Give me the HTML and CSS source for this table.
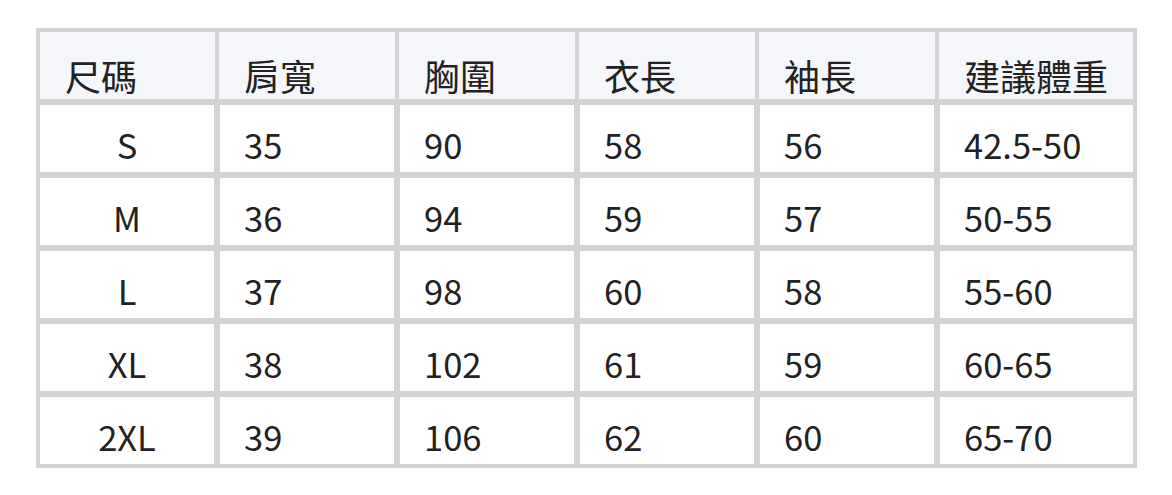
FILE: index.html
```html
<!DOCTYPE html>
<html lang="zh-Hant">
<head>
<meta charset="utf-8">
<title>尺碼表</title>
<link rel="stylesheet" href="styles.css">
</head>
<body>
<div class="size-table">
  <div class="cell head first">尺碼</div>
  <div class="cell head">肩寬</div>
  <div class="cell head">胸圍</div>
  <div class="cell head">衣長</div>
  <div class="cell head">袖長</div>
  <div class="cell head last">建議體重</div>

  <div class="cell data first">S</div>
  <div class="cell data">35</div>
  <div class="cell data">90</div>
  <div class="cell data">58</div>
  <div class="cell data">56</div>
  <div class="cell data last">42.5-50</div>

  <div class="cell data first">M</div>
  <div class="cell data">36</div>
  <div class="cell data">94</div>
  <div class="cell data">59</div>
  <div class="cell data">57</div>
  <div class="cell data last">50-55</div>

  <div class="cell data first">L</div>
  <div class="cell data">37</div>
  <div class="cell data">98</div>
  <div class="cell data">60</div>
  <div class="cell data">58</div>
  <div class="cell data last">55-60</div>

  <div class="cell data first">XL</div>
  <div class="cell data">38</div>
  <div class="cell data">102</div>
  <div class="cell data">61</div>
  <div class="cell data">59</div>
  <div class="cell data last">60-65</div>

  <div class="cell data first">2XL</div>
  <div class="cell data">39</div>
  <div class="cell data">106</div>
  <div class="cell data">62</div>
  <div class="cell data">60</div>
  <div class="cell data last">65-70</div>
</div>
</body>
</html>
```
FILE: styles.css
```css
html, body {
  margin: 0;
  padding: 0;
  background: #ffffff;
}

body {
  font-family: "Noto Sans CJK TC", "Noto Sans", sans-serif;
  color: #222222;
}

.size-table {
  display: grid;
  grid-template-columns: 177px 180px 180px 180px 180px 196px;
  grid-template-rows: 67px repeat(5, 73px);
  width: max-content;
  margin: 28px 0 0 36px;
  border: 4px solid #d3d3d3;
}

.cell {
  box-sizing: border-box;
  font-size: 34.5px;
  line-height: 35px;
  font-weight: 400;
  white-space: nowrap;
  border: 0 solid #d3d3d3;
}

.head {
  background: #f5f6fa;
  font-size: 36px;
  line-height: 36px;
  border-left-width: 2px;
  border-right-width: 2px;
  padding: 25px 0 0 25px;
}

.data {
  background: #ffffff;
  border-top-width: 6px;
  border-left-width: 3px;
  border-right-width: 3px;
  padding: 22px 0 0 24px;
}

.cell.first {
  border-left-width: 0;
}

.cell.last {
  border-right-width: 0;
}

.data.first {
  padding-left: 0;
  text-align: center;
}
```
